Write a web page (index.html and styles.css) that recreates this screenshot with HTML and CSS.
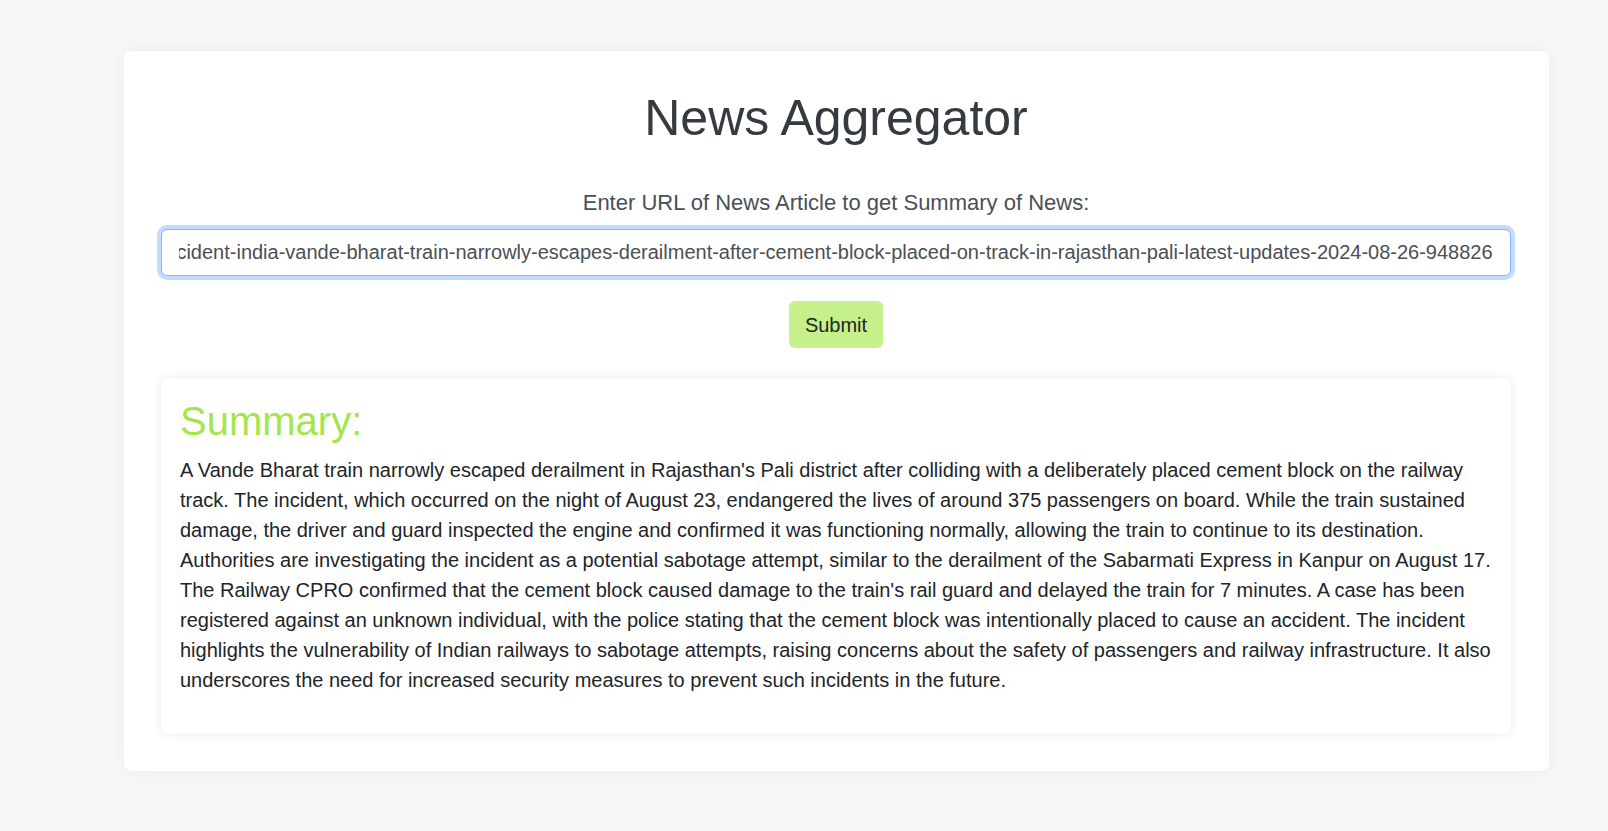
FILE: index.html
```html
<!DOCTYPE html>
<html lang="en">
<head>
<meta charset="utf-8">
<title>News Aggregator</title>
<link rel="stylesheet" href="styles.css">
</head>
<body>
<div class="page">
  <main class="card">
    <h1 class="title">News Aggregator</h1>
    <form class="form">
      <label class="label" for="url">Enter URL of News Article to get Summary of News:</label>
      <input class="url-input" id="url" type="text" value="https://www.freepressjournal.in/india/train-accident-india-vande-bharat-train-narrowly-escapes-derailment-after-cement-block-placed-on-track-in-rajasthan-pali-latest-updates-2024-08-26-948826">
      <button class="submit" type="button">Submit</button>
    </form>
    <section class="summary">
      <h2 class="summary-title">Summary:</h2>
      <p class="summary-text">A Vande Bharat train narrowly escaped derailment in Rajasthan's Pali district after colliding with a deliberately placed cement block on the railway track. The incident, which occurred on the night of August 23, endangered the lives of around 375 passengers on board. While the train sustained damage, the driver and guard inspected the engine and confirmed it was functioning normally, allowing the train to continue to its destination. Authorities are investigating the incident as a potential sabotage attempt, similar to the derailment of the Sabarmati Express in Kanpur on August 17. The Railway CPRO confirmed that the cement block caused damage to the train's rail guard and delayed the train for 7 minutes. A case has been registered against an unknown individual, with the police stating that the cement block was intentionally placed to cause an accident. The incident highlights the vulnerability of Indian railways to sabotage attempts, raising concerns about the safety of passengers and railway infrastructure. It also underscores the need for increased security measures to prevent such incidents in the future.</p>
    </section>
  </main>
</div>
<script src="script.js"></script>
</body>
</html>
```
FILE: styles.css
```css
* { box-sizing: border-box; }
html, body { margin: 0; padding: 0; }
body {
  background: #f7f8fa;
  font-family: "Liberation Sans", Arial, sans-serif;
  color: #212529;
}
.page {
  padding: 51px 59px 60px 124px;
}
.card {
  background: #fff;
  border-radius: 8px;
  box-shadow: 0 0 20px rgba(0, 0, 0, 0.06);
  padding: 37px 38px 37px 37px;
  display: flex;
  flex-direction: column;
}
.title {
  margin: 0;
  font-size: 50px;
  line-height: 60px;
  font-weight: 400;
  color: #343a40;
  text-align: center;
}
.form {
  display: flex;
  flex-direction: column;
  align-items: center;
  margin-top: 42px;
}
.label {
  font-size: 22px;
  line-height: 26px;
  color: #495057;
}
.url-input {
  margin-top: 13px;
  width: 100%;
  height: 47px;
  padding: 8px 17px;
  font-family: "Liberation Sans", Arial, sans-serif;
  font-size: 20px;
  line-height: 30px;
  color: #495057;
  background: #fff;
  border: 1px solid #86b7fe;
  border-radius: 6px;
  box-shadow: 0 0 0 4px rgba(13, 110, 253, 0.25);
  outline: none;
}
.submit {
  margin-top: 25px;
  width: 94px;
  height: 47px;
  padding: 2px 0 0;
  font-family: "Liberation Sans", Arial, sans-serif;
  font-size: 20px;
  color: #212529;
  background: #c6f08a;
  border: none;
  border-radius: 6px;
}
.summary {
  margin-top: 30px;
  background: #fff;
  border-radius: 8px;
  box-shadow: 0 0 10px rgba(0, 0, 0, 0.09);
  padding: 21px 19px 18px 19px;
}
.summary-title {
  margin: 0;
  font-size: 40px;
  line-height: 44px;
  font-weight: 400;
  color: #a3e64a;
}
.summary-text {
  margin: 12px 0 21px;
  font-size: 20px;
  line-height: 30px;
  color: #212529;
}
```
FILE: script.js
```js
var input = document.querySelector('.url-input');
input.focus();
input.setSelectionRange(input.value.length, input.value.length);
input.scrollLeft = input.scrollWidth;
```
